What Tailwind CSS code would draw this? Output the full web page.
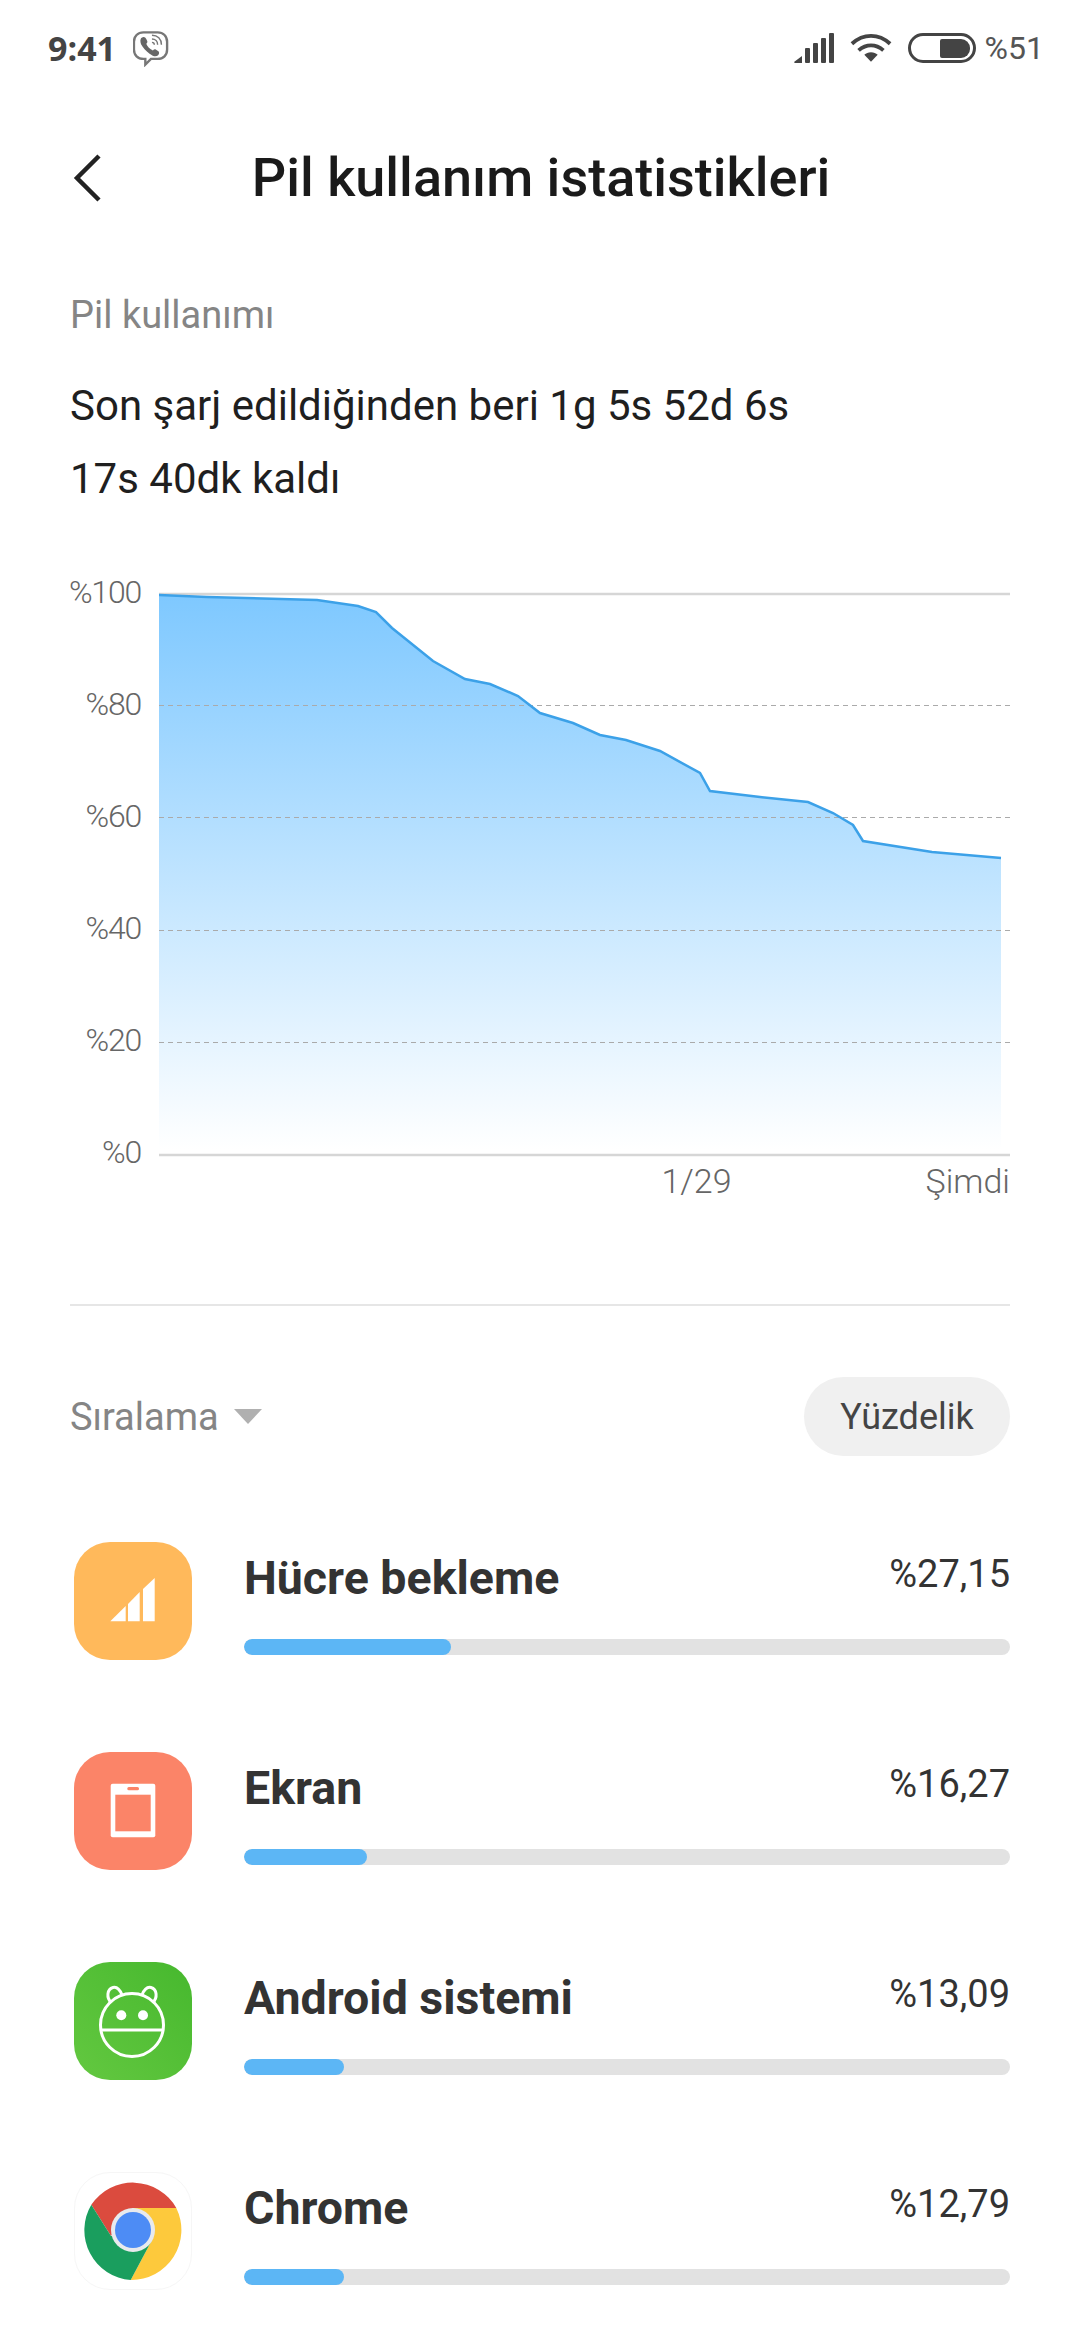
<!DOCTYPE html>
<html lang="tr">
<head>
  <meta charset="UTF-8" />
  <meta name="viewport" content="width=device-width, initial-scale=1" />
  <title>Pil kullanım istatistikleri</title>
  <script src="https://cdn.jsdelivr.net/npm/@tailwindcss/browser@4"></script>
</head>
<body class="bg-white">
  <div class="w-[1080px] h-[2340px] overflow-hidden bg-white font-[Roboto,sans-serif]">

    <!-- status bar -->
    <div class="h-[96px] flex items-center justify-between pl-[48px] pr-[36px]">
      <div class="flex items-center gap-[17px]">
        <span class="font-['Open_Sans',sans-serif] font-bold text-[34px] leading-none text-[#444]">9:41</span>
        <svg class="w-[36px] h-[37px]" viewBox="0 0 38 38" fill="none" stroke="#777">
          <path stroke-width="2.500" d="M11 2h15c6 0 10 4 10 10v8c0 6-4 10-10 10h-7l-6 6v-6h-2c-6 0-10-4-10-10v-8C1 6 5 2 11 2z" />
          <path fill="#666" stroke="none" d="M9 8c2-2 4-1 5 1l1 2c.5 1 0 2-1 3 1 3 4 6 7 7 1-1 2-1.500 3-1l2 1.500c2 1 2 3 .5 4.500-2 2-5 1.500-9-1.500-4-3-7-6.500-9-10-1-3-1-5 .5-7z" />
          <path stroke-width="1.500" d="M20 5c6 0 10 4 10 10M20 9c3.500 0 6 2.500 6 6M20 12.500c1.500 0 2.500 1 2.500 2.500" />
        </svg>
      </div>
      <div class="flex items-center text-[#444]">
        <svg class="w-[40px] h-[30px]" viewBox="0 0 40 30" fill="currentColor">
          <path d="M0 29l8-6v7H1.500A1.500 1.500 0 0 1 0 29z" />
          <rect x="11" y="15" width="5" height="15" rx="1" />
          <rect x="19" y="10" width="5" height="20" rx="1" />
          <rect x="27" y="5" width="5" height="25" rx="1" />
          <rect x="35" y="0" width="5" height="30" rx="1" />
        </svg>
        <svg class="w-[42px] h-[31px] ml-[16px]" viewBox="0 0 44 32" fill="none" stroke="currentColor" stroke-width="4">
          <path d="M2 11c12-11 28-11 40 0" />
          <path d="M9 18c8-7 18-7 26 0" />
          <path fill="currentColor" stroke="none" d="M22 20c3 0 5 1 7 2.500L22 30l-7-7.500c2-1.500 4-2.500 7-2.500z" />
        </svg>
        <div class="ml-[16px] w-[68px] h-[30px] rounded-full border-[3px] border-[#444] flex justify-end items-center pr-[3px]">
          <div class="w-[30px] h-[19px] bg-[#444] rounded-r-[9px] rounded-l-[2px]"></div>
        </div>
        <span class="ml-[9px] text-[32px] leading-none font-normal text-[#555]">%51</span>
      </div>
    </div>

    <!-- title bar -->
    <div class="h-[164px] relative flex items-center justify-center">
      <svg class="absolute left-[72px] top-[57px] w-[32px] h-[50px]" viewBox="0 0 32 50" fill="none" stroke="#222" stroke-width="4.500">
        <path d="M27 3L5 25l22 22" />
      </svg>
      <h1 class="ml-[2px] text-[54px] font-medium leading-none text-[#1a1a1a]">Pil kullanım istatistikleri</h1>
    </div>

    <div class="px-[70px] pt-[30px]">
      <p class="h-[50px] text-[38px] leading-[50px] text-[#858585]">Pil kullanımı</p>
      <div class="mt-[29px] text-[42px] leading-[73px] text-[#1f1f1f]">
        <p>Son şarj edildiğinden beri 1g 5s 52d 6s</p>
        <p>17s 40dk kaldı</p>
      </div>

      <!-- chart -->
      <div class="mt-[57px] flex text-[#666] text-[32px] font-light">
        <div class="w-[71px] h-[600px] flex flex-col justify-between items-end tracking-[-1.2px]">
          <span class="h-[40px] leading-[40px]">%100</span>
          <span class="h-[40px] leading-[40px]">%80</span>
          <span class="h-[40px] leading-[40px]">%60</span>
          <span class="h-[40px] leading-[40px]">%40</span>
          <span class="h-[40px] leading-[40px]">%20</span>
          <span class="h-[40px] leading-[40px]">%0</span>
        </div>
        <div class="ml-[18px] w-[851px]">
          <svg class="mt-[20px] w-[851px] h-[566px] block" viewBox="159 592 851 566" fill="none">
            <defs>
              <linearGradient id="pilFill" x1="0" y1="594" x2="0" y2="1150" gradientUnits="userSpaceOnUse">
                <stop offset="0" stop-color="#7ec8ff" />
                <stop offset="1" stop-color="#ffffff" />
              </linearGradient>
            </defs>
            <path fill="url(#pilFill)" d="M159 595L207 597 317 600 358 606 376 612 392 628 433 661 465 679 490 684 518 696 540 713 573 723 600 735 626 740 660 751 700 773 710 791 760 797 808 802 833 813 853 825 863 841 932 852 1001 858V1155H159z" />
            <path stroke="#d6d6d6" stroke-width="2.500" d="M159 594H1010M159 1155H1010" />
            <path stroke="#aaaaaa" stroke-width="1" stroke-dasharray="5 4" d="M159 705.500H1010M159 817.500H1010M159 930.500H1010M159 1042.500H1010" />
            <path stroke="#3ca1e8" stroke-width="2.500" d="M159 595L207 597 317 600 358 606 376 612 392 628 433 661 465 679 490 684 518 696 540 713 573 723 600 735 626 740 660 751 700 773 710 791 760 797 808 802 833 813 853 825 863 841 932 852 1001 858" />
          </svg>
          <div class="h-[46px] flex justify-end items-center gap-[194px] text-[34px]">
            <span>1/29</span>
            <span>Şimdi</span>
          </div>
        </div>
      </div>

      <div class="mt-[100px] h-[2px] bg-[#e6e6e6]"></div>

      <!-- sort -->
      <div class="mt-[71px] h-[79px] flex items-center justify-between">
        <div class="flex items-center gap-[15px] pt-[2px]">
          <span class="text-[38px] text-[#858585] font-normal">Sıralama</span>
          <span class="w-0 h-0 border-l-[14px] border-r-[14px] border-t-[15px] border-l-transparent border-r-transparent border-t-[#b0b0b0] mb-[2px]"></span>
        </div>
        <div class="w-[206px] h-[79px] rounded-full bg-[#f0f0f0] flex items-center justify-center text-[36px] text-[#444]">Yüzdelik</div>
      </div>

      <!-- usage rows -->
      <div class="mt-[86px] flex flex-col gap-[92px]">

        <div class="flex pl-[4px]">
          <div class="w-[118px] h-[118px] rounded-[36px] bg-[#ffb95b] shrink-0">
            <svg class="w-full h-full" viewBox="0 0 118 118" fill="#fff">
              <polygon points="36.300,79.300 51.700,64 51.700,79.300" />
              <polygon points="54,62 65.700,50 65.700,79.300 54,79.300" />
              <polygon points="69,47 80.700,36 80.700,79.300 69,79.300" />
            </svg>
          </div>
          <div class="ml-[52px] flex-1">
            <div class="h-[74px] flex items-center justify-between">
              <span class="text-[46.500px] font-bold text-[#333]">Hücre bekleme</span>
              <span class="text-[38px] text-[#333] mb-[10px]">%27,15</span>
            </div>
            <div class="mt-[23px] h-[16px] rounded-full bg-[#e2e2e2] overflow-hidden"><div class="w-[207px] h-full rounded-full bg-[#5cb6f5]"></div></div>
          </div>
        </div>

        <div class="flex pl-[4px]">
          <div class="w-[118px] h-[118px] rounded-[36px] bg-[#fb8468] shrink-0">
            <svg class="w-full h-full" viewBox="0 0 118 118" fill="#fb8468">
              <rect x="36.700" y="31.700" width="44.600" height="53.600" rx="2" fill="#fff" />
              <rect x="41.300" y="42.700" width="35.400" height="36.600" />
              <rect x="53.300" y="35" width="11.700" height="3.300" rx="1.500" />
            </svg>
          </div>
          <div class="ml-[52px] flex-1">
            <div class="h-[74px] flex items-center justify-between">
              <span class="text-[46.500px] font-bold text-[#333]">Ekran</span>
              <span class="text-[38px] text-[#333] mb-[10px]">%16,27</span>
            </div>
            <div class="mt-[23px] h-[16px] rounded-full bg-[#e2e2e2] overflow-hidden"><div class="w-[123px] h-full rounded-full bg-[#5cb6f5]"></div></div>
          </div>
        </div>

        <div class="flex pl-[4px]">
          <div class="w-[118px] h-[118px] rounded-[36px] bg-linear-to-tr from-[#63c840] to-[#46b82e] shrink-0">
            <svg class="w-full h-full" viewBox="0 0 118 118" fill="none" stroke="#fff" stroke-width="3">
              <circle cx="58" cy="63" r="31.500" />
              <path d="M27 68H89" />
              <path d="M37.500 41C32 36 33 27 39 25.500 43.500 24.500 46 28 48 33" />
              <path d="M78.500 41C84 36 83 27 77 25.500 72.500 24.500 70 28 68 33" />
              <circle cx="47.300" cy="53.300" r="5" fill="#fff" stroke="none" />
              <circle cx="69" cy="53.300" r="5" fill="#fff" stroke="none" />
            </svg>
          </div>
          <div class="ml-[52px] flex-1">
            <div class="h-[74px] flex items-center justify-between">
              <span class="text-[46.500px] font-bold text-[#333]">Android sistemi</span>
              <span class="text-[38px] text-[#333] mb-[10px]">%13,09</span>
            </div>
            <div class="mt-[23px] h-[16px] rounded-full bg-[#e2e2e2] overflow-hidden"><div class="w-[100px] h-full rounded-full bg-[#5cb6f5]"></div></div>
          </div>
        </div>

        <div class="flex pl-[4px]">
          <div class="w-[118px] h-[118px] rounded-[36px] bg-white border border-[#f6f6f6] shrink-0">
            <svg class="w-full h-full" viewBox="1 1 116 116">
              <path fill="#db4b3e" d="M17.300 32.700A50 50 0 0 1 102.300 36H59L37 64z" />
              <path fill="#fdc93c" d="M102.300 36A50 50 0 0 1 56.700 108L78 68 59 36z" />
              <path fill="#1a9e5e" d="M17.300 32.700A50 50 0 0 0 56.700 108L78 68 37 64z" />
              <circle cx="59" cy="58" r="22" fill="#e8eaed" />
              <circle cx="59" cy="58" r="18" fill="#4d8cf5" />
            </svg>
          </div>
          <div class="ml-[52px] flex-1">
            <div class="h-[74px] flex items-center justify-between">
              <span class="text-[46.500px] font-bold text-[#333]">Chrome</span>
              <span class="text-[38px] text-[#333] mb-[10px]">%12,79</span>
            </div>
            <div class="mt-[23px] h-[16px] rounded-full bg-[#e2e2e2] overflow-hidden"><div class="w-[100px] h-full rounded-full bg-[#5cb6f5]"></div></div>
          </div>
        </div>

      </div>
    </div>
  </div>
</body>
</html>
